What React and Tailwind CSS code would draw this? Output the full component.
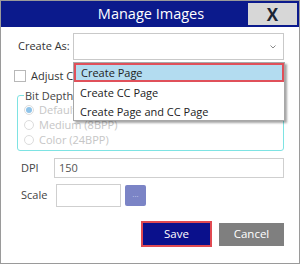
import React from 'react';

const font = { fontFamily: '"Open Sans", "Noto Sans", sans-serif' };

const Radio = ({ checked, label }) => (
  <div className="flex items-center h-[15px] gap-[5px]">
    <span className="w-[10px] h-[10px] rounded-full border border-[#dcdcdc] bg-white flex items-center justify-center">
      {checked && <span className="w-[6px] h-[6px] rounded-full bg-[#8fc3e8]" />}
    </span>
    <span className="text-[11px] text-[#c6c6c6] leading-none whitespace-nowrap">{label}</span>
  </div>
);

const App = () => {
  return (
    <div
      className="w-[300px] h-[264px] bg-white border border-[#9a9a9a] flex flex-col relative overflow-hidden"
      style={font}
    >
      {/* Title bar */}
      <div className="h-[26px] bg-[#0b1a8c] flex items-center relative shrink-0">
        <div className="flex-1 text-center text-white text-[14.5px] leading-none pl-[2px]">Manage Images</div>
        <button className="absolute right-[2px] top-[2px] w-[49px] h-[22px] bg-[#d7d7d7] flex items-center justify-center text-[#1a2433] font-bold text-[17px] leading-none">
          X
        </button>
      </div>

      {/* Body */}
      <div className="flex flex-col px-[15px] pt-[6px]">
        <div className="flex items-center gap-[6px] h-[27px]">
          <span className="text-[11px] text-[#333] w-[51px] pl-[2px] whitespace-nowrap">Create As:</span>
          <div className="flex-1 h-[27px] border border-[#c9c9c9] bg-white flex items-center justify-end pr-[7px]">
            <svg width="6" height="4" viewBox="0 0 6 4" fill="none" stroke="#8a8a8a" strokeWidth="1">
              <path d="M0.5 0.5 L3 3 L5.5 0.5" />
            </svg>
          </div>
        </div>

        <div className="flex items-center gap-[5px] mt-[10px] h-[12px] -ml-[2px]">
          <span className="w-[12px] h-[12px] border border-[#b8b8b8] bg-white shrink-0" />
          <span className="whitespace-nowrap text-[11px] text-[#333]">Adjust C</span>
        </div>

        <fieldset className="mt-[8px] border border-[#7ee3e3] rounded-[3px] px-[6px] pb-[3px] pt-0 ml-[1px]">
          <legend className="text-[11px] text-[#444] px-[1px] leading-none">Bit Depth</legend>
          <div className="flex flex-col pt-[1px]">
            <Radio checked label="Default" />
            <Radio label="Medium (8BPP)" />
            <Radio label="Color (24BPP)" />
          </div>
        </fieldset>

        <div className="flex items-center mt-[7px] h-[20px]">
          <span className="text-[11px] text-[#444] w-[38px] pl-[5px]">DPI</span>
          <div className="flex-1 h-[20px] border border-[#cfcfcf] text-[11px] text-[#555] pl-[4px] flex items-center">150</div>
        </div>

        <div className="flex items-center mt-[6px] h-[23px]">
          <span className="text-[11px] text-[#444] w-[40px] pl-[5px]">Scale</span>
          <div className="w-[65px] h-[23px] border border-[#cfcfcf]" />
          <div className="ml-[4px] w-[21px] h-[21px] bg-[#7b84c6] rounded-[2px] flex items-center justify-center text-[#c4c9ea] text-[8px] leading-none pb-[3px]">...</div>
        </div>

        <div className="flex justify-end items-center gap-[7px] mt-[14px]">
          <button className="w-[71px] h-[26px] bg-[#0a108c] border-2 border-[#e04a52] text-white text-[11.5px] leading-none">Save</button>
          <button className="w-[65px] h-[23px] bg-[#7f7f7f] text-white text-[11.5px] leading-none">Cancel</button>
        </div>
      </div>

      {/* Open dropdown menu */}
      <div className="absolute left-[72px] top-[61px] w-[212px] bg-white border border-[#a8a8a8] shadow-[2px_2px_2px_rgba(0,0,0,0.35)] flex flex-col text-[11px] text-[#222]">
        <div className="h-[19px] bg-[#b3dcf0] border-2 border-[#e0505a] flex items-center pl-[5px] leading-none">Create Page</div>
        <div className="h-[20px] flex items-center pl-[6px] leading-none">Create CC Page</div>
        <div className="h-[18px] flex items-center pl-[6px] leading-none">Create Page and CC Page</div>
      </div>
    </div>
  );
};

export default App;
